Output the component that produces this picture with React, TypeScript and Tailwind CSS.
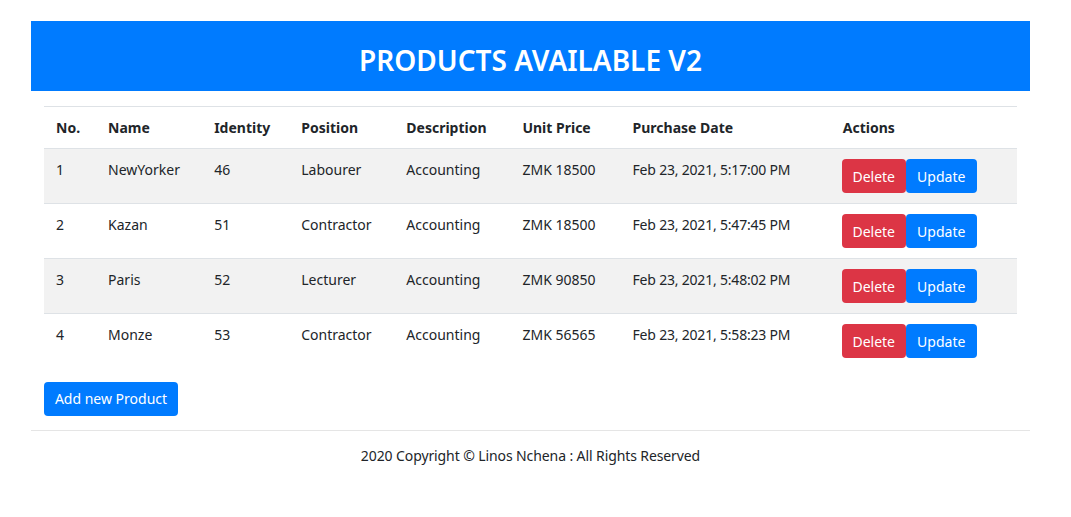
import React from "react";

const rows = [
  { no: 1, name: "NewYorker", id: 46, pos: "Labourer", desc: "Accounting", price: "ZMK 18500", date: "Feb 23, 2021, 5:17:00 PM" },
  { no: 2, name: "Kazan", id: 51, pos: "Contractor", desc: "Accounting", price: "ZMK 18500", date: "Feb 23, 2021, 5:47:45 PM" },
  { no: 3, name: "Paris", id: 52, pos: "Lecturer", desc: "Accounting", price: "ZMK 90850", date: "Feb 23, 2021, 5:48:02 PM" },
  { no: 4, name: "Monze", id: 53, pos: "Contractor", desc: "Accounting", price: "ZMK 56565", date: "Feb 23, 2021, 5:58:23 PM" },
];

const widths = ["w-[52px]", "w-[106px]", "w-[87px]", "w-[105px]", "w-[116px]", "w-[110px]", "w-[210px]", "w-[186px]"];
const heads = ["No.", "Name", "Identity", "Position", "Description", "Unit Price", "Purchase Date", "Actions"];

export default function App() {
  return (
    <div className="min-h-screen bg-white text-[#212529]" style={{ fontFamily: '"Noto Sans", "Open Sans", sans-serif' }}>
      <div className="w-[999px] ml-[31px] pt-[21px]">
        <div className="h-[70px] bg-[#007bff] flex items-center justify-center">
          <h1 className="text-white text-[28px] font-semibold leading-none mt-[8px]">PRODUCTS AVAILABLE V2</h1>
        </div>
        <div className="px-[13px] pt-[15px]">
          <table className="w-full border-collapse text-[14px] table-fixed">
            <thead>
              <tr className="h-[42px] border-t border-[#dee2e6]">
                {heads.map((h, i) => (
                  <th key={h} className={`${widths[i]} text-left font-bold px-[12px] align-middle`}>{h}</th>
                ))}
              </tr>
            </thead>
            <tbody>
              {rows.map((r, idx) => (
                <tr key={r.no} className={`h-[55px] border-t border-[#dee2e6] ${idx % 2 === 0 ? "bg-[#f2f2f2]" : "bg-white"}`}>
                  <td className="px-[12px] align-top pt-[10px]">{r.no}</td>
                  <td className="px-[12px] align-top pt-[10px]">{r.name}</td>
                  <td className="px-[12px] align-top pt-[10px]">{r.id}</td>
                  <td className="px-[12px] align-top pt-[10px]">{r.pos}</td>
                  <td className="px-[12px] align-top pt-[10px]">{r.desc}</td>
                  <td className="px-[12px] align-top pt-[10px]">{r.price}</td>
                  <td className="px-[12px] align-top pt-[10px] tracking-[-0.2px]">{r.date}</td>
                  <td className="pl-[11px] pr-[12px] align-top pt-[10px]">
                    <div className="flex">
                      <button className="h-[34px] w-[64px] bg-[#dc3545] text-white rounded-[4px] text-[14px]">Delete</button>
                      <button className="h-[34px] w-[71px] bg-[#007bff] text-white rounded-[4px] text-[14px]">Update</button>
                    </div>
                  </td>
                </tr>
              ))}
            </tbody>
          </table>
          <button className="mt-[13px] h-[34px] w-[134px] bg-[#007bff] text-white rounded-[4px] text-[14px]">Add new Product</button>
        </div>
        <div className="mt-[14px] border-t border-[#e5e5e5] pt-[14px] text-center text-[14px] tracking-[-0.1px]">
          2020 Copyright © Linos Nchena : All Rights Reserved
        </div>
      </div>
    </div>
  );
}
